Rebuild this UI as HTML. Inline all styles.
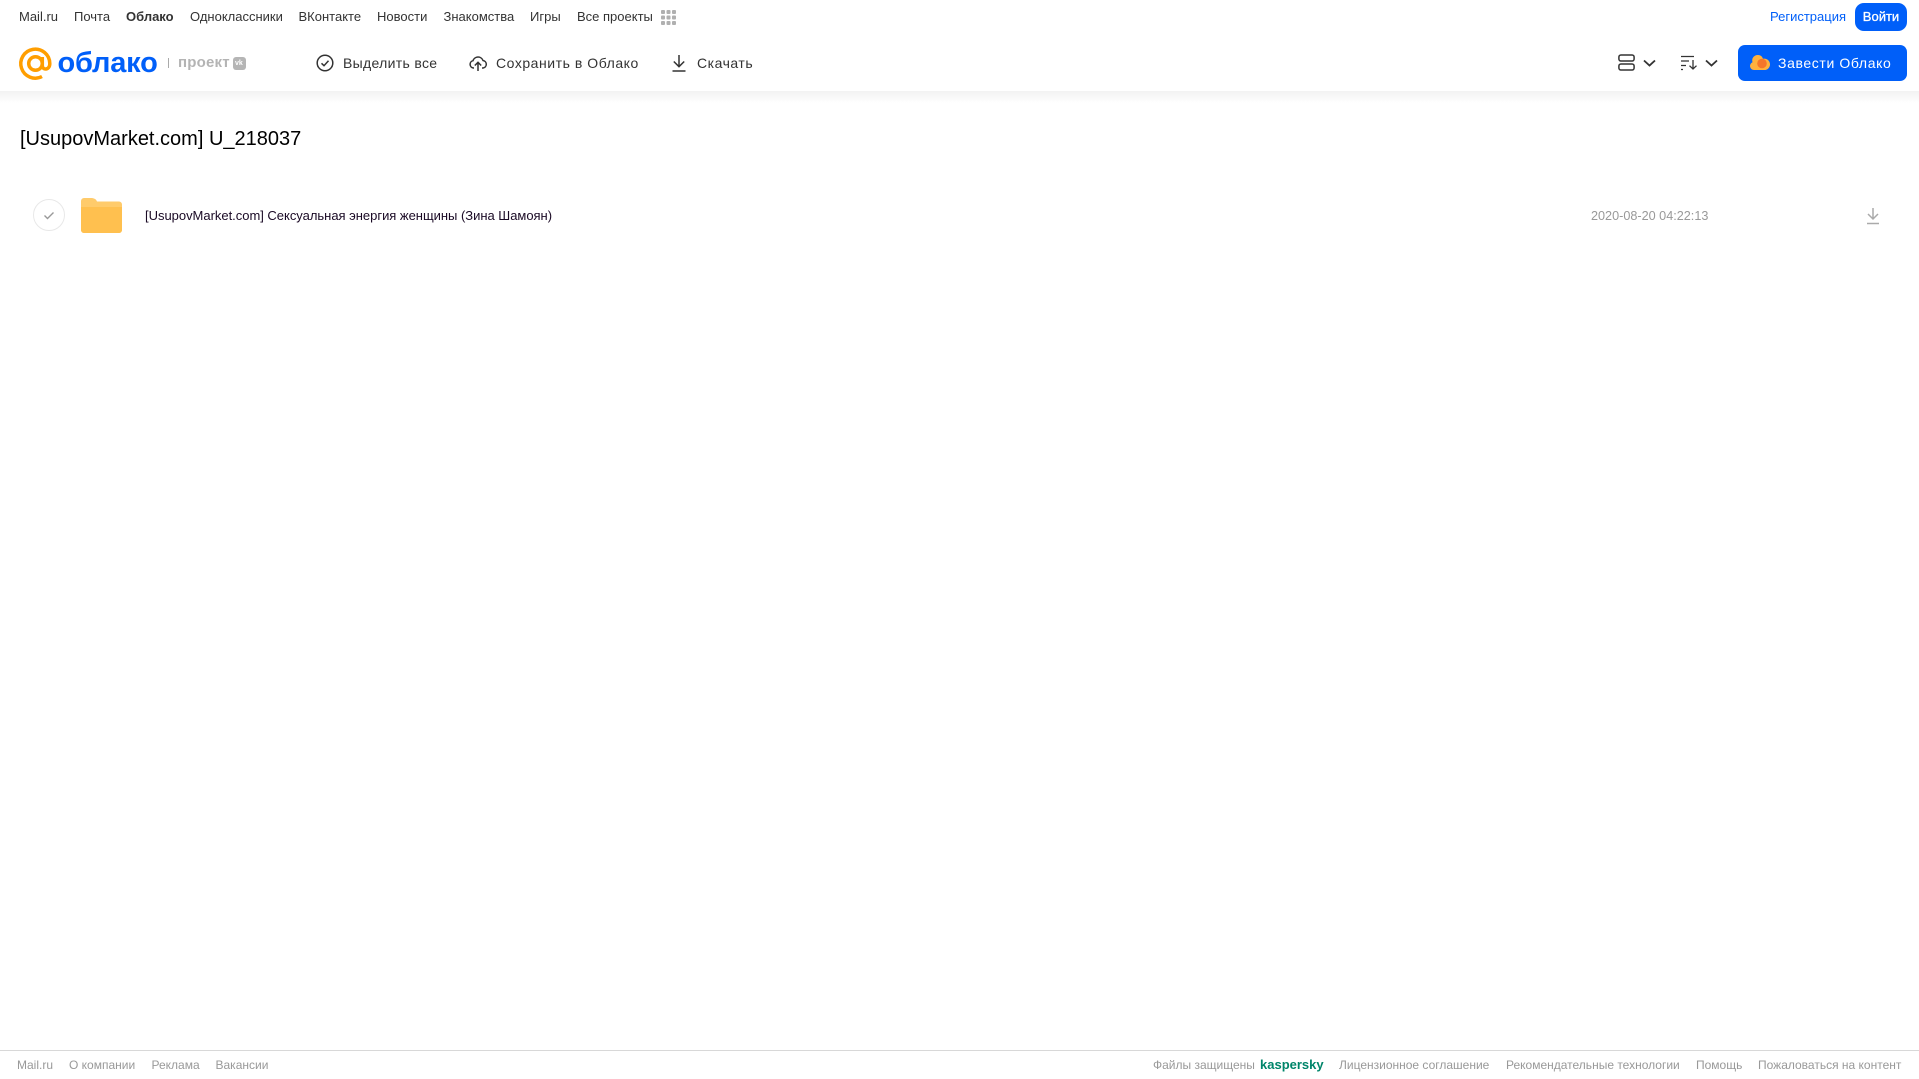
<!DOCTYPE html>
<html lang="ru"><head><meta charset="utf-8"><title>Облако</title>
<style>
html,body{margin:0;padding:0;width:1919px;height:1079px;overflow:hidden;background:#fff;font-family:"Liberation Sans",sans-serif}
.t{position:absolute;white-space:nowrap;line-height:20px}
.n{top:7px;font-size:13px;color:#333}
.h{top:53px;font-size:14px;color:#333;letter-spacing:.32px}
.f{top:1055px;font-size:12px;color:#999}
svg{position:absolute;overflow:visible}
</style></head><body>
<div style="position:absolute;left:0;top:91px;width:1919px;height:12px;background:linear-gradient(#f2f2f2,#fff)"></div>
<span class="t n" style="left:19px">Mail.ru</span>
<span class="t n" style="left:74px">Почта</span>
<span class="t n" style="left:126px;font-weight:bold">Облако</span>
<span class="t n" style="left:190px">Одноклассники</span>
<span class="t n" style="left:298.500px">ВКонтакте</span>
<span class="t n" style="left:377px">Новости</span>
<span class="t n" style="left:443.500px">Знакомства</span>
<span class="t n" style="left:530px">Игры</span>
<span class="t n" style="left:577px">Все проекты</span>
<svg style="left:661px;top:10px" width="15" height="15" fill="#b0b0b0"><rect x="0" y="0" width="4" height="4" rx="1"/><rect x="5.500" y="0" width="4" height="4" rx="1"/><rect x="11" y="0" width="4" height="4" rx="1"/><rect x="0" y="5.500" width="4" height="4" rx="1"/><rect x="5.500" y="5.500" width="4" height="4" rx="1"/><rect x="11" y="5.500" width="4" height="4" rx="1"/><rect x="0" y="11" width="4" height="4" rx="1"/><rect x="5.500" y="11" width="4" height="4" rx="1"/><rect x="11" y="11" width="4" height="4" rx="1"/></svg>
<span class="t n" style="left:1770px;color:#005ff9">Регистрация</span>
<div style="position:absolute;left:1855px;top:3px;width:52px;height:28px;border-radius:9px;background:#005ff9;color:#fff;font-size:13px;line-height:28px;text-align:center;-webkit-text-stroke:.3px #fff">Войти</div>

<svg style="left:19px;top:47px" width="33" height="33" viewBox="0 0 33 33" fill="none" stroke="#ff9e00" stroke-width="3.500"><circle cx="16.500" cy="16.500" r="6.800"/><path d="M23.300 10v8.500c0 5 7.500 5 7.500-2A14.500 14.500 0 1 0 23 29.500"/></svg>
<span class="t" style="left:57.500px;top:43px;font-size:29px;line-height:40px;font-weight:bold;color:#005ff9;letter-spacing:-.2px">облако</span>
<div style="position:absolute;left:168px;top:58px;width:1px;height:10px;background:#aaa"></div>
<span class="t" style="left:178px;top:53px;font-size:15px;font-weight:bold;color:#b4b4b4;letter-spacing:.2px">проект</span>
<div style="position:absolute;left:233px;top:57px;width:13px;height:13px;border-radius:3px;background:#b5b5b5"></div>
<span class="t" style="left:235px;top:58px;font-size:7px;line-height:11px;font-weight:bold;color:#fff">vk</span>

<svg style="left:316px;top:54px" width="18" height="18" viewBox="0 0 18 18" fill="none" stroke="#333" stroke-width="1.500"><circle cx="9" cy="9" r="7.800"/><path d="M5.500 9.300l2.500 2.400 4.500-5"/></svg>
<span class="t h" style="left:343px">Выделить все</span>
<svg style="left:469px;top:54px" width="18" height="18" viewBox="0 0 18 18" fill="none" stroke="#333" stroke-width="1.500"><path d="M5 14H4.500a3.700 3.700 0 0 1-.5-7.300A5.300 5.300 0 0 1 14 6.500a3.800 3.800 0 0 1 .2 7.500H13"/><path d="M9 17V8.500M5.800 11.500L9 8.300l3.200 3.200"/></svg>
<span class="t h" style="left:496px;letter-spacing:.54px">Сохранить в Облако</span>
<svg style="left:670px;top:54px" width="18" height="18" viewBox="0 0 18 18" fill="none" stroke="#333" stroke-width="1.500"><path d="M9 1v11.500M3.800 7.500L9 12.700l5.200-5.200M2.500 17h13"/></svg>
<span class="t h" style="left:697px;letter-spacing:.52px">Скачать</span>

<svg style="left:1617.500px;top:54px" width="17" height="17" viewBox="0 0 17 17" fill="none" stroke="#333" stroke-width="1.500"><rect x=".9" y="1" width="15.200" height="6" rx="2"/><rect x=".9" y="10" width="15.200" height="6" rx="2"/></svg>
<svg style="left:1643px;top:59px" width="13" height="8" fill="none" stroke="#333" stroke-width="1.800"><path d="M1 1.500l5.500 5 5.500-5"/></svg>
<svg style="left:1681px;top:55px" width="17" height="15" fill="none" stroke="#333" stroke-width="1.300"><path d="M0 1.500h13M0 6h8M0 10.500h5M0 14.500h2M12 5v9M8.500 10.700L12 14l3.500-3.300"/></svg>
<svg style="left:1705px;top:59px" width="13" height="8" fill="none" stroke="#333" stroke-width="1.800"><path d="M1 1.500l5.500 5 5.500-5"/></svg>

<div style="position:absolute;left:1738px;top:45px;width:169px;height:36px;border-radius:7px;background:#005ff9"></div>
<svg style="left:1750px;top:54px" width="19" height="16" viewBox="0 0 19 16"><path d="M4 16a4 4 0 0 1-1.500-7.700A5.500 5.500 0 0 1 8 1a5 5 0 0 1 5 3.800A5.500 5.500 0 0 1 15.500 16z" fill="#ffb13d"/><circle cx="12" cy="9.500" r="4.800" fill="#f5762a"/></svg>
<span class="t h" style="left:1778px;color:#fff;letter-spacing:.62px">Завести Облако</span>

<span class="t" style="left:20px;top:127px;font-size:20px;line-height:24px;color:#000">[UsupovMarket.com] U_218037</span>

<svg style="left:33px;top:199px" width="32" height="32" fill="none"><circle cx="16" cy="16" r="15.500" stroke="#e8e8e8"/><path d="M11.500 16.500l3 3 6-6" stroke="#999" stroke-width="1.400"/></svg>
<svg style="left:81px;top:198px" width="41" height="35" viewBox="0 0 41 35"><path d="M0 3a3 3 0 0 1 3-3h7c3 0 5 1 6 3.500H38a3 3 0 0 1 3 3V32a3 3 0 0 1-3 3H3a3 3 0 0 1-3-3z" fill="#ffcb6b"/><path d="M0 9h41v23a3 3 0 0 1-3 3H3a3 3 0 0 1-3-3z" fill="#ffc04f"/></svg>
<span class="t" style="left:145px;top:206px;font-size:13px;color:#1a0a25;letter-spacing:-.02px">[UsupovMarket.com] Сексуальная энергия женщины (Зина Шамоян)</span>
<span class="t" style="left:1591px;top:206px;font-size:12.650px;color:#999">2020-08-20 04:22:13</span>
<svg style="left:1866px;top:207px" width="14" height="18" fill="none" stroke="#aaa" stroke-width="1.500"><path d="M7 1v11M2 7l5 5 5-5M1 16.500h12"/></svg>

<div style="position:absolute;left:0;top:1050px;width:1919px;height:1px;background:#d8d8d8"></div>
<span class="t f" style="left:17px">Mail.ru</span>
<span class="t f" style="left:69px">О компании</span>
<span class="t f" style="left:151.500px">Реклама</span>
<span class="t f" style="left:215.500px">Вакансии</span>
<span class="t f" style="left:1153px">Файлы защищены</span>
<span class="t f" style="left:1260px;font-weight:bold;color:#00856a;font-size:13px">kaspersky</span>
<span class="t f" style="left:1339px">Лицензионное соглашение</span>
<span class="t f" style="left:1506px">Рекомендательные технологии</span>
<span class="t f" style="left:1696px">Помощь</span>
<span class="t f" style="left:1758px">Пожаловаться на контент</span>
</body></html>
